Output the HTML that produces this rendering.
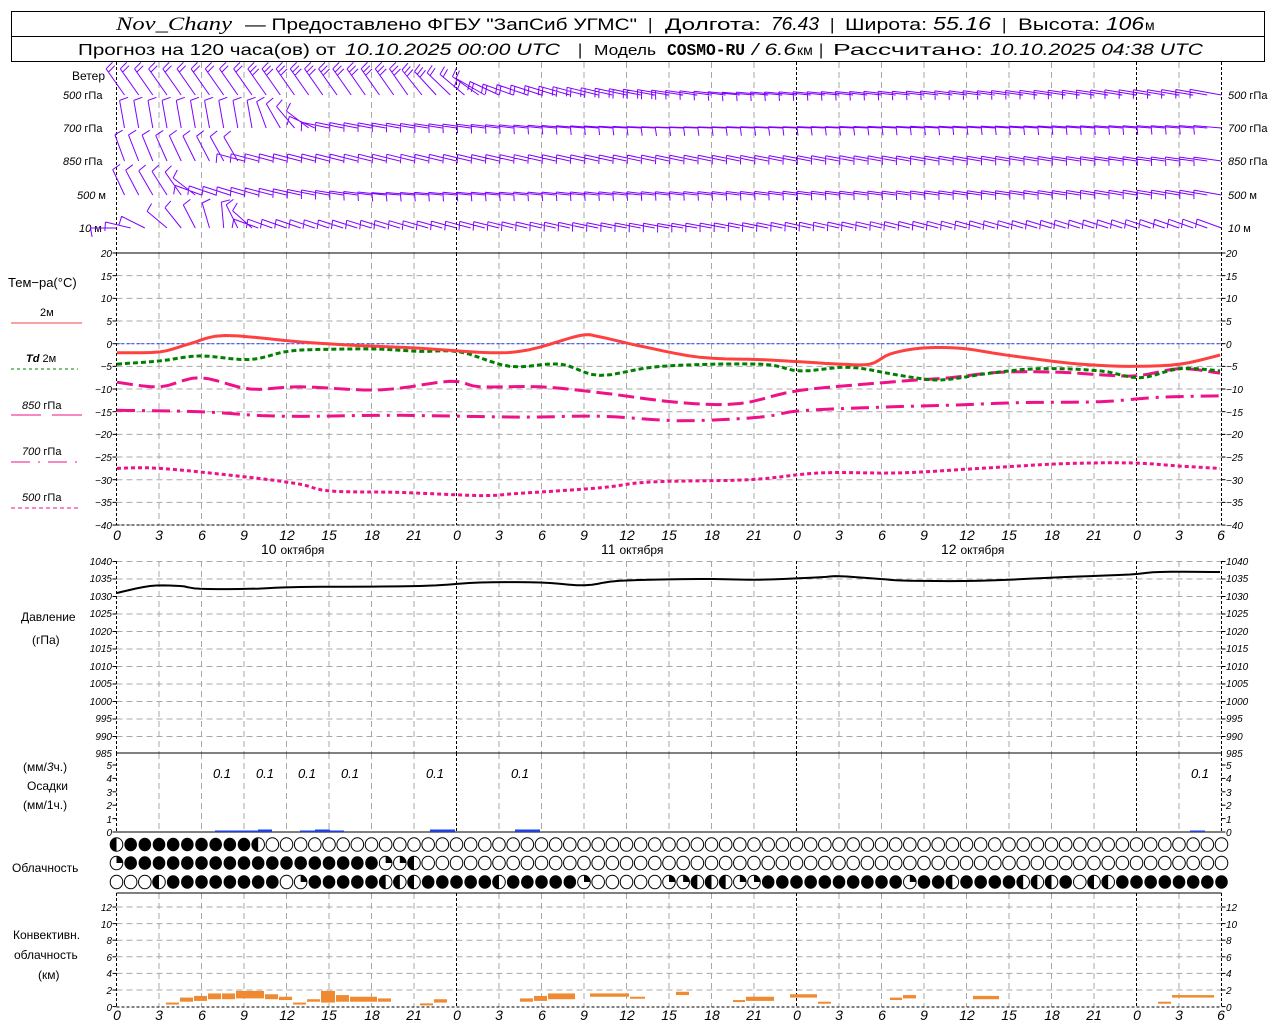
<!DOCTYPE html>
<html><head><meta charset="utf-8">
<style>
html,body{margin:0;padding:0;background:#fff;}
svg{display:block;}
text{font-family:"Liberation Sans",sans-serif;fill:#000;}
.it{font-style:italic;}
.tk{font-size:10px;font-style:italic;}
.lb{font-size:12px;}
</style></head>
<body>
<svg id="s" width="1280" height="1024" viewBox="0 0 1280 1024" xmlns="http://www.w3.org/2000/svg">
<rect x="0" y="0" width="1280" height="1024" fill="#fff"/>
<g id="grid"></g>
<!-- header -->
<rect x="11.5" y="11.5" width="1253" height="50" fill="none" stroke="#000" stroke-width="1"/>
<line x1="11.5" y1="36.5" x2="1264.5" y2="36.5" stroke="#000"/>
<g lengthAdjust="spacingAndGlyphs">
<text x="116" y="30" font-size="19" class="it" style="font-family:'Liberation Serif',serif" textLength="116" lengthAdjust="spacingAndGlyphs">Nov_Chany</text>
<text x="245" y="30" font-size="17" textLength="392" lengthAdjust="spacingAndGlyphs">— Предоставлено ФГБУ "ЗапСиб УГМС"</text>
<text x="648" y="30" font-size="17">|</text>
<text x="665" y="30" font-size="17" textLength="96" lengthAdjust="spacingAndGlyphs">Долгота:</text>
<text x="771" y="30" font-size="18" class="it" textLength="48" lengthAdjust="spacingAndGlyphs">76.43</text>
<text x="830" y="30" font-size="17">|</text>
<text x="845" y="30" font-size="17" textLength="82" lengthAdjust="spacingAndGlyphs">Широта:</text>
<text x="933" y="30" font-size="18" class="it" textLength="58" lengthAdjust="spacingAndGlyphs">55.16</text>
<text x="1002" y="30" font-size="17">|</text>
<text x="1018" y="30" font-size="17" textLength="82" lengthAdjust="spacingAndGlyphs">Высота:</text>
<text x="1106" y="30" font-size="18" class="it" textLength="38" lengthAdjust="spacingAndGlyphs">106</text>
<text x="1145" y="30" font-size="14">м</text>
<text x="78" y="55" font-size="16" textLength="258" lengthAdjust="spacingAndGlyphs">Прогноз на 120 часа(ов) от</text>
<text x="345" y="55" font-size="17" class="it" textLength="215" lengthAdjust="spacingAndGlyphs">10.10.2025 00:00 UTC</text>
<text x="578" y="55" font-size="16">|</text>
<text x="594" y="55" font-size="15" textLength="62" lengthAdjust="spacingAndGlyphs">Модель</text>
<text x="667" y="55" font-size="17" font-weight="bold" style="font-family:'Liberation Mono',monospace" textLength="78" lengthAdjust="spacingAndGlyphs">COSMO-RU</text>
<text x="752" y="55" font-size="17" class="it" textLength="44" lengthAdjust="spacingAndGlyphs">/ 6.6</text>
<text x="797" y="55" font-size="14">км</text>
<text x="819" y="55" font-size="16">|</text>
<text x="833" y="55" font-size="16" textLength="150" lengthAdjust="spacingAndGlyphs">Рассчитано:</text>
<text x="990" y="55" font-size="17" class="it" textLength="213" lengthAdjust="spacingAndGlyphs">10.10.2025 04:38 UTC</text>
</g>

<!-- left labels wind -->
<text x="72" y="80" class="lb">Ветер</text>
<text x="63" y="99" font-size="11"><tspan class="it">500</tspan> гПа</text>
<text x="63" y="132" font-size="11"><tspan class="it">700</tspan> гПа</text>
<text x="63" y="165" font-size="11"><tspan class="it">850</tspan> гПа</text>
<text x="77" y="199" font-size="11"><tspan class="it">500</tspan>  м</text>
<text x="79" y="232" font-size="11"><tspan class="it">10</tspan>   м</text>
<text x="1228" y="99" font-size="11"><tspan class="it">500</tspan> гПа</text>
<text x="1228" y="132" font-size="11"><tspan class="it">700</tspan> гПа</text>
<text x="1228" y="165" font-size="11"><tspan class="it">850</tspan> гПа</text>
<text x="1228" y="199" font-size="11"><tspan class="it">500</tspan>  м</text>
<text x="1228" y="232" font-size="11"><tspan class="it">10</tspan>   м</text>

<!-- temp legend -->
<text x="8" y="287" font-size="13">Тем−ра(°С)</text>
<text x="40" y="316" font-size="11">2м</text>
<line x1="11" y1="323" x2="82" y2="323" stroke="#ff4040"/>
<text x="26" y="362" font-size="11"><tspan class="it" font-weight="bold">Td</tspan>  2м</text>
<line x1="11" y1="369" x2="78" y2="369" stroke="#008000" stroke-dasharray="3,3"/>
<text x="22" y="409" font-size="11"><tspan class="it">850</tspan> гПа</text>
<line x1="11" y1="415" x2="41" y2="415" stroke="#ee1188"/><line x1="52" y1="415" x2="82" y2="415" stroke="#ee1188"/>
<text x="22" y="455" font-size="11"><tspan class="it">700</tspan> гПа</text>
<line x1="11" y1="462" x2="78" y2="462" stroke="#ee1188" stroke-dasharray="19,8,2,8"/>
<text x="22" y="501" font-size="11"><tspan class="it">500</tspan> гПа</text>
<line x1="11" y1="508" x2="78" y2="508" stroke="#ee1188" stroke-dasharray="4,3"/>

<!-- temp ticks -->
<g class="tk" text-anchor="end">
<text x="112" y="257">20</text><text x="112" y="280">15</text><text x="112" y="302">10</text><text x="112" y="325">5</text><text x="112" y="348">0</text><text x="112" y="370">−5</text><text x="112" y="393">−10</text><text x="112" y="416">−15</text><text x="112" y="438">−20</text><text x="112" y="461">−25</text><text x="112" y="484">−30</text><text x="112" y="506">−35</text><text x="112" y="529">−40</text>
</g>
<g class="tk">
<text x="1226" y="257">20</text><text x="1226" y="280">15</text><text x="1226" y="302">10</text><text x="1226" y="325">5</text><text x="1226" y="348">0</text><text x="1226" y="370">−5</text><text x="1226" y="393">−10</text><text x="1226" y="416">−15</text><text x="1226" y="438">−20</text><text x="1226" y="461">−25</text><text x="1226" y="484">−30</text><text x="1226" y="506">−35</text><text x="1226" y="529">−40</text>
</g>
<!-- hour labels middle -->
<g font-size="14" class="it" text-anchor="middle">
<text x="117" y="540">0</text><text x="159" y="540">3</text><text x="202" y="540">6</text><text x="244" y="540">9</text><text x="287" y="540">12</text><text x="329" y="540">15</text><text x="372" y="540">18</text><text x="414" y="540">21</text>
<text x="457" y="540">0</text><text x="499" y="540">3</text><text x="542" y="540">6</text><text x="584" y="540">9</text><text x="627" y="540">12</text><text x="669" y="540">15</text><text x="712" y="540">18</text><text x="754" y="540">21</text>
<text x="797" y="540">0</text><text x="839" y="540">3</text><text x="882" y="540">6</text><text x="924" y="540">9</text><text x="967" y="540">12</text><text x="1009" y="540">15</text><text x="1052" y="540">18</text><text x="1094" y="540">21</text>
<text x="1137" y="540">0</text><text x="1179" y="540">3</text><text x="1221" y="540">6</text>
</g>
<g font-size="14">
<text x="261" y="554">10 <tspan font-size="12">октября</tspan></text>
<text x="601" y="554">11 <tspan font-size="12">октября</tspan></text>
<text x="941" y="554">12 <tspan font-size="12">октября</tspan></text>
</g>
<!-- pressure -->
<text x="21" y="621" class="lb">Давление</text>
<text x="32" y="644" class="lb">(гПа)</text>
<g class="tk" text-anchor="end" font-size="9">
<text x="112" y="565">1040</text><text x="112" y="582">1035</text><text x="112" y="600">1030</text><text x="112" y="617">1025</text><text x="112" y="635">1020</text><text x="112" y="652">1015</text><text x="112" y="670">1010</text><text x="112" y="687">1005</text><text x="112" y="705">1000</text><text x="112" y="722">995</text><text x="112" y="740">990</text><text x="112" y="757">985</text>
</g>
<g class="tk" font-size="9">
<text x="1226" y="565">1040</text><text x="1226" y="582">1035</text><text x="1226" y="600">1030</text><text x="1226" y="617">1025</text><text x="1226" y="635">1020</text><text x="1226" y="652">1015</text><text x="1226" y="670">1010</text><text x="1226" y="687">1005</text><text x="1226" y="705">1000</text><text x="1226" y="722">995</text><text x="1226" y="740">990</text><text x="1226" y="757">985</text>
</g>
<!-- precip -->
<text x="23" y="771" class="lb">(мм/<tspan class="it">3</tspan>ч.)</text>
<text x="27" y="790" class="lb">Осадки</text>
<text x="23" y="809" class="lb">(мм/1ч.)</text>
<g class="tk" text-anchor="end">
<text x="112" y="769">5</text><text x="112" y="782">4</text><text x="112" y="796">3</text><text x="112" y="809">2</text><text x="112" y="823">1</text><text x="112" y="836">0</text>
</g>
<g class="tk">
<text x="1226" y="769">5</text><text x="1226" y="782">4</text><text x="1226" y="796">3</text><text x="1226" y="809">2</text><text x="1226" y="823">1</text><text x="1226" y="836">0</text>
</g>
<g font-size="13" class="it" text-anchor="middle">
<text x="222" y="778">0.1</text><text x="265" y="778">0.1</text><text x="307" y="778">0.1</text><text x="350" y="778">0.1</text><text x="435" y="778">0.1</text><text x="520" y="778">0.1</text><text x="1200" y="778">0.1</text>
</g>
<text x="12" y="872" class="lb">Облачность</text>
<!-- conv -->
<text x="13" y="939" class="lb">Конвективн.</text>
<text x="14" y="959" class="lb">облачность</text>
<text x="38" y="979" class="lb">(км)</text>
<g class="tk" text-anchor="end">
<text x="112" y="911">12</text><text x="112" y="928">10</text><text x="112" y="944">8</text><text x="112" y="961">6</text><text x="112" y="977">4</text><text x="112" y="994">2</text><text x="112" y="1011">0</text>
</g>
<g class="tk">
<text x="1226" y="911">12</text><text x="1226" y="928">10</text><text x="1226" y="944">8</text><text x="1226" y="961">6</text><text x="1226" y="977">4</text><text x="1226" y="994">2</text><text x="1226" y="1011">0</text>
</g>
<g font-size="14" class="it" text-anchor="middle">
<text x="117" y="1020">0</text><text x="159" y="1020">3</text><text x="202" y="1020">6</text><text x="244" y="1020">9</text><text x="287" y="1020">12</text><text x="329" y="1020">15</text><text x="372" y="1020">18</text><text x="414" y="1020">21</text>
<text x="457" y="1020">0</text><text x="499" y="1020">3</text><text x="542" y="1020">6</text><text x="584" y="1020">9</text><text x="627" y="1020">12</text><text x="669" y="1020">15</text><text x="712" y="1020">18</text><text x="754" y="1020">21</text>
<text x="797" y="1020">0</text><text x="839" y="1020">3</text><text x="882" y="1020">6</text><text x="924" y="1020">9</text><text x="967" y="1020">12</text><text x="1009" y="1020">15</text><text x="1052" y="1020">18</text><text x="1094" y="1020">21</text>
<text x="1137" y="1020">0</text><text x="1179" y="1020">3</text><text x="1221" y="1020">6</text>
</g>
<g id="dyn"></g>
</svg>
<script>
(function(){
var NS="http://www.w3.org/2000/svg";
var G=document.getElementById("grid"), D=document.getElementById("dyn");
function el(p,tag,a){var e=document.createElementNS(NS,tag);for(var k in a)e.setAttribute(k,a[k]);p.appendChild(e);return e;}
function ln(p,x1,y1,x2,y2,c,w,da){var a={x1:x1,y1:y1,x2:x2,y2:y2,stroke:c,"stroke-width":w||1};if(da)a["stroke-dasharray"]=da;return el(p,"line",a);}
var X0=116.5, PH=14.1667;
var panels=[[62,253],[253,525],[561,753],[753,832],[893,1007]];
function hg(y0,y1,step){for(var y=y0;y<=y1+0.1;y+=step)ln(G,X0,y,1221.5,y,"#a8a8a8",1,"6,4");}
hg(253+22.67,525,22.67);
hg(561.5,753,17.5);
hg(907,1006,16.6);
panels.forEach(function(p){
 for(var k=0;k<=26;k++){var x=X0+k*42.5;var blk=(k%8==0)||k==26;
  ln(G,x,p[0],x,p[1],blk?"#000":"#a8a8a8",1,blk?"3,2":"6,4");}
});
function ticks(y0,y1,step){for(var y=y0;y<=y1+0.1;y+=step){ln(G,X0-4,y,X0,y,"#000",1);ln(G,1221.5,y,1225.5,y,"#000",1);}}
ticks(253,525,22.67);ticks(561.5,753,17.5);ticks(765,832,13.4);ticks(907,1007,16.6);
ln(G,X0,253,1221.5,253,"#000",1);ln(G,X0,753,1221.5,753,"#000",1);ln(G,X0,893,1221.5,893,"#000",1);
ln(G,X0,832,1221.5,832,"#000",1);ln(G,X0,1007,1221.5,1007,"#000",1,"3,2");ln(G,X0,525,1221.5,525,"#000",1,"3,2");
ln(G,X0,343.7,1221.5,343.7,"#2040ff",1,"3,2");
function T(t){return 343.7-t*4.533;}
function curve(pts,fy,c,w,da){var d="";pts.forEach(function(p,i){d+=(i?"L":"M")+p[0]+","+fy(p[1]).toFixed(1);});var a={d:d,fill:"none",stroke:c,"stroke-width":w,"stroke-linejoin":"round"};if(da)a["stroke-dasharray"]=da;el(D,"path",a);}
function smooth(pts){
 var out=[];for(var i=0;i<pts.length-1;i++){var p0=pts[Math.max(0,i-1)],p1=pts[i],p2=pts[i+1],p3=pts[Math.min(pts.length-1,i+2)];
 for(var t=0;t<1;t+=0.2){var t2=t*t,t3=t2*t;
 var f=function(a,b,c,d){return 0.5*((2*b)+(-a+c)*t+(2*a-5*b+4*c-d)*t2+(-a+3*b-3*c+d)*t3);};
 out.push([f(p0[0],p1[0],p2[0],p3[0]).toFixed(1),f(p0[1],p1[1],p2[1],p3[1])]);}}
 out.push(pts[pts.length-1]);return out;}
var P=[[117,1031],[150,1033],[180,1033],[200,1032.2],[250,1032.2],[300,1032.7],[420,1033],[480,1034],[540,1034],[585,1033.2],[620,1034.5],[700,1035],[760,1034.8],[820,1035.5],[840,1035.8],[880,1035],[910,1034.5],[980,1034.5],[1060,1035.5],[1130,1036.3],[1160,1037],[1220,1037]];
curve(smooth(P),function(p){return 561.5+(1040-p)*3.5;},"#000",2);
curve(smooth([[117,-27.5],[160,-27.5],[250,-29.5],[300,-31],[330,-32.5],[400,-32.8],[480,-33.5],[520,-33],[600,-31.8],[650,-30.5],[750,-30],[820,-28.5],[900,-28.5],[980,-27.5],[1060,-26.5],[1130,-26.3],[1180,-27],[1220,-27.5]]),T,"#ee1188",3,"4,3");
curve(smooth([[117,-14.7],[200,-15],[280,-16],[400,-15.8],[520,-16.2],[600,-16],[680,-17],[760,-16.2],[800,-14.8],[880,-14],[960,-13.5],[1020,-13],[1100,-12.8],[1160,-11.8],[1220,-11.5]]),T,"#ee1188",3,"18,7,3,7");
curve(smooth([[117,-8.5],[160,-9.5],[200,-7.5],[250,-10],[300,-9.5],[380,-10.2],[450,-8.3],[480,-9.5],[540,-9.5],[600,-10.8],[680,-13],[740,-13.2],[800,-10.3],[900,-8.3],[950,-7.5],[1000,-6.3],[1060,-6.3],[1110,-7],[1140,-7],[1180,-5.5],[1220,-6.5]]),T,"#ee1188",3,"16,6");
curve(smooth([[117,-4.5],[160,-3.8],[200,-2.7],[250,-3.5],[290,-1.6],[340,-1.2],[380,-1.2],[420,-1.7],[460,-1.8],[510,-5],[560,-4.5],[600,-7],[660,-5],[760,-4.5],[800,-6],[850,-5.2],[900,-7],[940,-8],[990,-6.5],[1040,-5.5],[1100,-6],[1140,-7.5],[1180,-5.5],[1220,-6]]),T,"#008000",3,"5,3");
curve(smooth([[117,-2],[160,-1.8],[190,0],[225,1.8],[300,0.4],[350,-0.3],[420,-1],[490,-2],[530,-1.3],[580,1.8],[600,1.5],[640,-0.5],[700,-3],[760,-3.5],[800,-4],[840,-4.5],[870,-4.5],[890,-2.3],[920,-1],[960,-1],[1000,-2.3],[1040,-3.5],[1080,-4.5],[1130,-5],[1180,-4.5],[1220,-2.5]]),T,"#ff4040",3);
// precip bars (thin)
[[215,244,1.5],[244,258,1.5],[258,272,2.5],[300,315,1.5],[315,330,2.5],[330,344,1.5],[430,455,2.5],[515,540,2.5],[1190,1205,1.5]].forEach(function(b){el(D,"rect",{x:b[0],y:832-b[2],width:b[1]-b[0],height:b[2],fill:"#2040e0"});});
function K(k){return 1006.7-k*8.3;}
[[166,180,0.5,0.4],[180,194,1.1,0.6],[194,208,1.3,0.7],[208,222,1.6,0.9],[222,236,1.6,0.9],[236,265,1.9,1.0],[265,279,1.5,0.9],[279,293,1.2,0.8],[293,307,0.5,0.4],[307,321,0.9,0.6],[321,336,1.9,0.5],[336,350,1.4,0.6],[350,378,1.2,0.6],[378,392,1.0,0.6],[420,434,0.4,0.3],[434,448,0.9,0.5],[520,534,1.0,0.6],[534,548,1.3,0.7],[548,576,1.6,0.9],[590,630,1.6,1.2],[630,646,1.2,1.0],[676,690,1.8,1.4],[733,746,0.8,0.6],[746,775,1.2,0.7],[790,818,1.5,1.1],[818,832,0.6,0.5],[890,903,1.1,0.8],[903,917,1.4,1.0],[973,1000,1.3,0.9],[1158,1172,0.6,0.5],[1172,1215,1.4,1.1]].forEach(function(b){var y1=K(b[2]),y2=K(b[3]);if(y2-y1<2)y2=y1+2;el(D,"rect",{x:b[0],y:y1,width:b[1]-b[0]-1,height:y2-y1,fill:"#f08a30"});});
var rows=[
"HFFFFFFFFFH"+"O".repeat(68),
"QFFFFFFFFFFFFFFFFFFQQH"+"O".repeat(57),
"OOOHFFFFFFFFOQFFFFFHHHFFFFFHFFFFFQOOOOOQQHHHQQFFFFFFFFFFQFFHFFFFHHHFOHHFFFFFFFF"];
var ry=[844.5,863,882];
rows.forEach(function(r,ri){for(var i=0;i<79;i++){var c=r.charAt(i)||"O";var cx=X0+i*PH,cy=ry[ri],R=6.3;
 if(c=="F")el(D,"ellipse",{cx:cx,cy:cy,rx:R,ry:R+0.5,fill:"#000"});
 else{el(D,"ellipse",{cx:cx,cy:cy,rx:R,ry:R+0.5,fill:"#fff",stroke:"#000","stroke-width":1});
  if(c=="H")el(D,"path",{d:"M"+cx+","+(cy-R-0.5)+"A"+R+","+(R+0.5)+" 0 0 0 "+cx+","+(cy+R+0.5)+"Z",fill:"#000"});
  if(c=="Q")el(D,"path",{d:"M"+cx+","+cy+"L"+cx+","+(cy-R-0.5)+"A"+R+","+(R+0.5)+" 0 0 1 "+(cx+R)+","+cy+"Z",fill:"#000"});}
}});
// wind barbs
var levels=[
 [95,32,[[0,125,2],[20,125,3],[24,140,2],[28,160,2],[36,168,2],[45,175,1],[78,170,1]]],
 [128,28,[[0,100,1],[9,100,1],[12,130,1],[15,168,1],[40,178,1],[78,175,1]]],
 [161,28,[[0,110,1],[8,120,1],[9,165,1],[40,168,1],[78,172,1]]],
 [195,28,[[0,115,1],[4,125,1],[6,160,1],[20,175,1],[78,170,1]]],
 [228,26,[[0,180,1],[3,140,1],[7,95,1],[10,160,1],[40,170,1],[78,160,1]]]];
function interp(kf,i){for(var j=0;j<kf.length-1;j++){if(i>=kf[j][0]&&i<=kf[j+1][0]){var t=(i-kf[j][0])/(kf[j+1][0]-kf[j][0]);return [kf[j][1]+t*(kf[j+1][1]-kf[j][1]),Math.round(kf[j][2]+t*(kf[j+1][2]-kf[j][2]))];}}return [kf[kf.length-1][1],kf[kf.length-1][2]];}
var d="";
levels.forEach(function(L){var y=L[0],len=L[1];for(var i=0;i<=78;i++){var v=interp(L[2],i),a=v[0]*Math.PI/180,n=v[1];
 var bx=X0+i*PH+(v[0]<150?8:0),by=y;var ex=bx+len*Math.cos(a),ey=by-len*Math.sin(a);
 d+="M"+bx.toFixed(1)+","+by+"L"+ex.toFixed(1)+","+ey.toFixed(1);
 var ba=(v[0]<150?v[0]-80:v[0]+100)*Math.PI/180;
 for(var k=0;k<n;k++){var sx=ex-k*4*Math.cos(a),sy=ey+k*4*Math.sin(a);
  d+="M"+sx.toFixed(1)+","+sy.toFixed(1)+"l"+(9*Math.cos(ba)).toFixed(1)+","+(-9*Math.sin(ba)).toFixed(1);}
}});
el(D,"path",{d:d,fill:"none",stroke:"#8000ff","stroke-width":1});
})();
</script>
</body></html>
